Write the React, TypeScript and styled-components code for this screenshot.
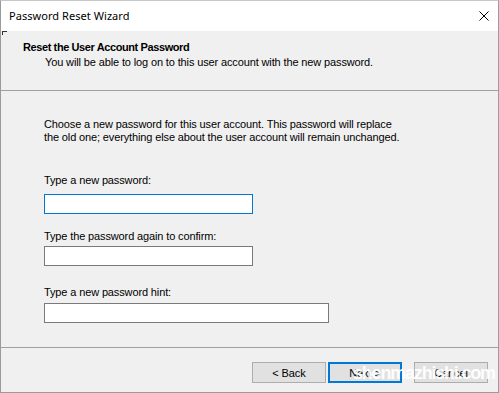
import styled, { createGlobalStyle } from "styled-components";

const GlobalStyle = createGlobalStyle`
  html, body {
    margin: 0;
    padding: 0;
    background: #f0f0f0;
  }
  * {
    box-sizing: border-box;
  }
`;

const Window = styled.div`
  position: relative;
  width: 499px;
  height: 393px;
  display: flex;
  flex-direction: column;
  background: #f0f0f0;
  border: 1px solid #9b9b9b;
  border-top-color: #c8c8c8;
  font-family: "Liberation Sans", Arial, sans-serif;
  font-size: 11px;
  line-height: 13px;
  letter-spacing: -0.13px;
  color: #000;
  overflow: hidden;
`;

const TitleBar = styled.div`
  height: 30px;
  flex: none;
  display: flex;
  align-items: center;
  justify-content: space-between;
  padding: 0 9px 0 8px;
  background: #fff;
`;

const TitleText = styled.span`
  font-family: "Noto Sans", "Segoe UI", sans-serif;
  font-size: 11px;
  line-height: 16px;
  letter-spacing: 0.05px;
  color: #000;
  margin-top: -1px;
`;

const CloseIcon = styled.svg`
  width: 10px;
  height: 10px;
  margin-top: -1px;
`;

const Header = styled.div`
  position: relative;
  height: 60px;
  flex: none;
  padding: 10px 0 0 22px;
  border-bottom: 1px solid #a0a0a0;

  &::before {
    content: "";
    position: absolute;
    left: 1px;
    top: 0;
    width: 4px;
    height: 3px;
    border-top: 1px solid #333;
    border-left: 1px solid #333;
  }
`;

const HeaderTitle = styled.div`
  font-weight: bold;
  letter-spacing: -0.4px;
`;

const HeaderSub = styled.div`
  margin-top: 2px;
  padding-left: 22px;
`;

const Content = styled.div`
  flex: 1;
  padding: 27px 0 0 43px;
  display: flex;
  flex-direction: column;
  align-items: flex-start;
`;

const Intro = styled.p`
  margin: 0;
`;

const Label = styled.label<{ $top: number; $gap: number }>`
  display: block;
  margin-top: ${(p) => p.$top}px;
  margin-bottom: ${(p) => p.$gap}px;
`;

const Input = styled.input<{ $width: number; $focused?: boolean }>`
  display: block;
  width: ${(p) => p.$width}px;
  height: 20px;
  margin: 0;
  padding: 0 3px;
  background: #fff;
  border: 1px solid ${(p) => (p.$focused ? "#0078d7" : "#7a7a7a")};
  outline: none;
  font: inherit;
`;

const Footer = styled.div`
  height: 45px;
  flex: none;
  display: flex;
  align-items: flex-start;
  padding: 14px 10px 0 0;
  border-top: 1px solid #a0a0a0;
`;

const Spacer = styled.div`
  flex: 1;
`;

const Button = styled.button<{ $primary?: boolean; $gapLeft?: number }>`
  width: 74px;
  height: 21px;
  margin: 0 0 0 ${(p) => p.$gapLeft ?? 0}px;
  padding: 0;
  background: #e1e1e1;
  border: ${(p) => (p.$primary ? "2px solid #0078d7" : "1px solid #adadad")};
  font-family: "Liberation Sans", Arial, sans-serif;
  font-size: 11px;
  letter-spacing: -0.1px;
  color: #000;
`;

const Watermark = styled.span`
  position: absolute;
  left: 352px;
  top: 361px;
  font-family: "Liberation Sans", Arial, sans-serif;
  font-weight: bold;
  font-size: 18px;
  line-height: 22px;
  letter-spacing: -1.2px;
  color: rgba(255, 255, 255, 0.95);
  pointer-events: none;
`;

export default function App() {
  return (
    <>
      <GlobalStyle />
      <Window>
        <TitleBar>
          <TitleText>Password Reset Wizard</TitleText>
          <CloseIcon viewBox="0 0 10 10">
            <path d="M0.5 0.5 L9.5 9.5 M9.5 0.5 L0.5 9.5" stroke="#000" strokeWidth="1" fill="none" />
          </CloseIcon>
        </TitleBar>
        <Header>
          <HeaderTitle>Reset the User Account Password</HeaderTitle>
          <HeaderSub>You will be able to log on to this user account with the new password.</HeaderSub>
        </Header>
        <Content>
          <Intro>
            Choose a new password for this user account. This password will replace
            <br />
            the old one; everything else about the user account will remain unchanged.
          </Intro>
          <Label $top={30} $gap={7}>Type a new password:</Label>
          <Input type="password" $width={209} $focused />
          <Label $top={16} $gap={3}>Type the password again to confirm:</Label>
          <Input type="password" $width={209} />
          <Label $top={20} $gap={4}>Type a new password hint:</Label>
          <Input type="text" $width={285} />
        </Content>
        <Footer>
          <Spacer />
          <Button>&lt; Back</Button>
          <Button $primary $gapLeft={2}>Next &gt;</Button>
          <Button $gapLeft={12}>Cancel</Button>
        </Footer>
        <Watermark>shenmazhishi.com</Watermark>
      </Window>
    </>
  );
}
